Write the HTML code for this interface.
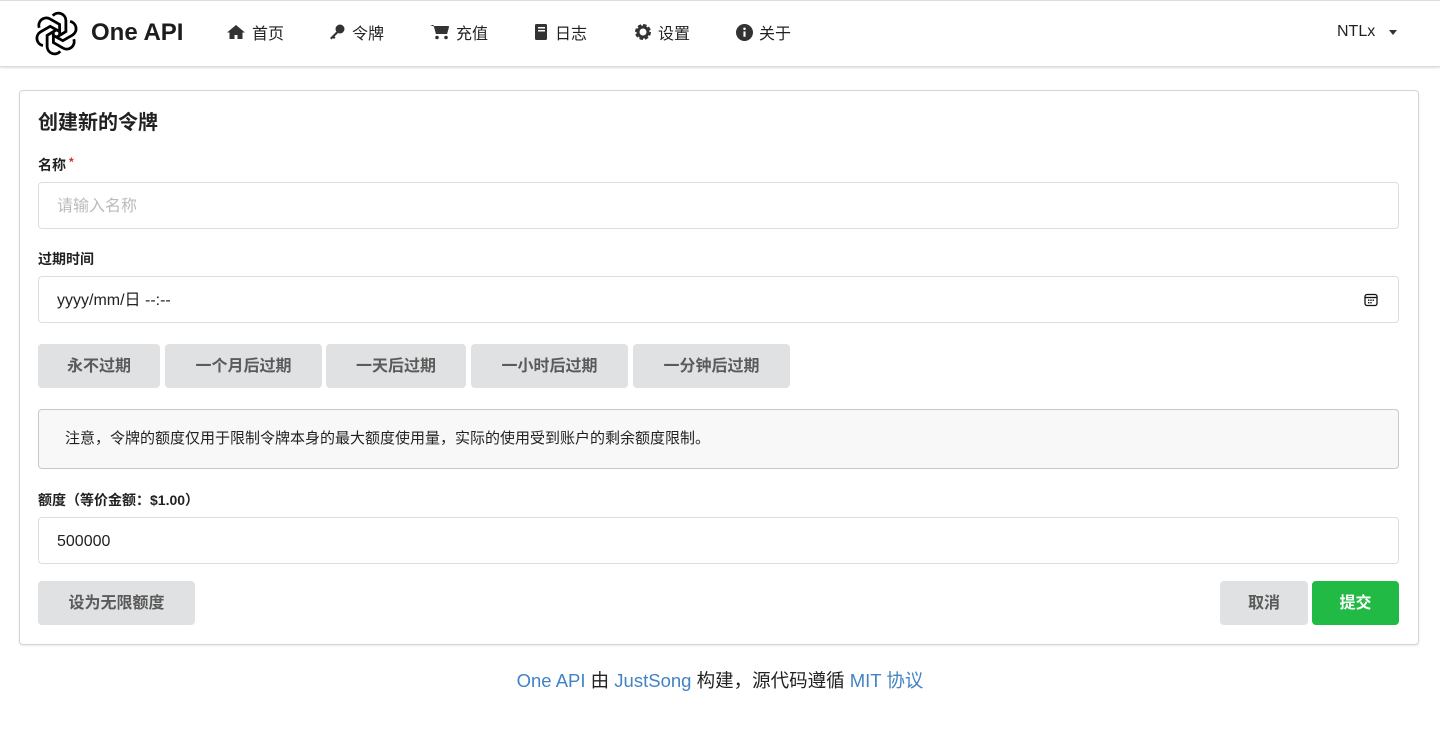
<!DOCTYPE html>
<html><head><meta charset="utf-8"><style>
*{box-sizing:border-box;margin:0;padding:0}
body{width:1440px;height:734px;background:#fff;font-family:"Liberation Sans","Noto Sans CJK SC",sans-serif;color:rgba(0,0,0,.87);font-size:14px;position:relative;overflow:hidden}
.nav{position:absolute;left:0;top:0;width:1440px;height:67px;border-top:1px solid #ddd;border-bottom:1px solid #ddd;box-shadow:0 1px 2px rgba(34,36,38,.15);background:#fff}
.nav .it{position:absolute;top:20px;height:22px;font-size:16px;display:flex;align-items:center;gap:6px;color:rgba(0,0,0,.87)}
.brand{position:absolute;left:91px;top:18px;font-size:24px;font-weight:bold;color:#1b1c1d}
.card{position:absolute;left:19px;top:90px;width:1400px;height:555px;border:1px solid #d4d4d5;border-radius:4px;box-shadow:0 1px 2px rgba(34,36,38,.1)}
.abs{position:absolute}
h1{position:absolute;left:38px;top:106px;font-size:20px;font-weight:bold}
.lb{position:absolute;left:38px;font-size:14px;font-weight:bold}
.in{position:absolute;left:38px;width:1361px;height:47px;border:1px solid rgba(34,36,38,.15);border-radius:4px;padding:0 18px;line-height:47px;font-size:16px}
.btn{position:absolute;height:44px;background:#e0e1e2;color:rgba(0,0,0,.6);font-weight:bold;font-size:16px;border-radius:4px;text-align:center;line-height:46px}
.msg{position:absolute;left:38px;top:409px;width:1361px;height:60px;background:#f8f8f9;border:1px solid rgba(34,36,38,.22);border-radius:4px;padding-left:26px;line-height:58px;font-size:15px}
.foot{position:absolute;left:0;width:1440px;top:667px;text-align:center;font-size:18.5px}
.foot a{color:#4183c4;text-decoration:none}
</style></head><body>
<div class="nav">
<svg class="abs" style="left:34px;top:10px" width="45" height="45" viewBox="0 0 24 24" fill="none" stroke="#000" stroke-width="1.5">
<g transform="translate(12 12)">
<path d="M-2 -9.5 a4 4 0 0 1 7 2.5 v6 l-5 3" transform="rotate(0)"/>
<path d="M-2 -9.5 a4 4 0 0 1 7 2.5 v6 l-5 3" transform="rotate(60)"/>
<path d="M-2 -9.5 a4 4 0 0 1 7 2.5 v6 l-5 3" transform="rotate(120)"/>
<path d="M-2 -9.5 a4 4 0 0 1 7 2.5 v6 l-5 3" transform="rotate(180)"/>
<path d="M-2 -9.5 a4 4 0 0 1 7 2.5 v6 l-5 3" transform="rotate(240)"/>
<path d="M-2 -9.5 a4 4 0 0 1 7 2.5 v6 l-5 3" transform="rotate(300)"/>
</g></svg>
<div class="brand">One API</div>
<div class="it" style="left:226px"><svg width="20" height="16" viewBox="0 0 20 16"><path d="M10 1L1 8.5h2.5V15h5v-4h3v4h5V8.5H19z" fill="#333"/></svg>首页</div>
<div class="it" style="left:328px"><svg width="18" height="16" viewBox="0 0 18 16"><circle cx="12" cy="5" r="4.5" fill="#333"/><path d="M9 7L2 14l1.5 1.5 1.5-1.5 1 1 1.5-1.5-1-1 3.5-3.5z" fill="#333"/></svg>令牌</div>
<div class="it" style="left:430px"><svg width="20" height="16" viewBox="0 0 20 16"><path d="M0 1h3.5l2.5 9h11l2-7H5" fill="#333"/><path d="M4 2h15l-2 8H6z" fill="#333"/><circle cx="7" cy="13.5" r="1.8" fill="#333"/><circle cx="16" cy="13.5" r="1.8" fill="#333"/></svg>充值</div>
<div class="it" style="left:533px"><svg width="16" height="16" viewBox="0 0 16 16"><rect x="2" y="0" width="12" height="16" rx="1.5" fill="#333"/><rect x="5" y="3" width="7" height="1.5" fill="#fff"/><rect x="5" y="6" width="7" height="1.5" fill="#fff"/></svg>日志</div>
<div class="it" style="left:634px"><svg width="18" height="18" viewBox="0 0 18 18"><circle cx="9" cy="9" r="6" fill="none" stroke="#333" stroke-width="4" stroke-dasharray="3 1.7"/><circle cx="9" cy="9" r="5" fill="none" stroke="#333" stroke-width="3"/></svg>设置</div>
<div class="it" style="left:736px"><svg width="17" height="17" viewBox="0 0 16 16"><circle cx="8" cy="8" r="8" fill="#333"/><rect x="7" y="7" width="2" height="5" fill="#fff"/><circle cx="8" cy="4.5" r="1.2" fill="#fff"/></svg>关于</div>
<div class="it" style="left:1337px">NTLx <span style="display:inline-block;margin-left:8px;border-left:4px solid transparent;border-right:4px solid transparent;border-top:5px solid #333"></span></div>
</div>
<div class="card"></div>
<h1>创建新的令牌</h1>
<div class="lb" style="top:155px">名称<span style="color:#db2828;font-size:12px;vertical-align:top;margin-left:3px">*</span></div>
<div class="in" style="top:182px;color:#bbb">请输入名称</div>
<div class="lb" style="top:249px">过期时间</div>
<div class="in" style="top:276px;color:#222">yyyy/mm/日 --:--
<svg class="abs" style="right:20px;top:16px" width="14" height="14" viewBox="0 0 14 14"><rect x="1" y="1.5" width="12" height="11" rx="2" fill="none" stroke="#111" stroke-width="1.3"/><line x1="1" y1="4.5" x2="13" y2="4.5" stroke="#111" stroke-width="1.3"/><g fill="#111"><rect x="4" y="6.5" width="1.4" height="1.4"/><rect x="6.3" y="6.5" width="1.4" height="1.4"/><rect x="8.6" y="6.5" width="1.4" height="1.4"/><rect x="4" y="9" width="1.4" height="1.4"/><rect x="6.3" y="9" width="1.4" height="1.4"/></g></svg></div>
<div class="btn" style="left:38px;top:344px;width:122px">永不过期</div>
<div class="btn" style="left:165px;top:344px;width:157px">一个月后过期</div>
<div class="btn" style="left:326px;top:344px;width:140px">一天后过期</div>
<div class="btn" style="left:471px;top:344px;width:157px">一小时后过期</div>
<div class="btn" style="left:633px;top:344px;width:157px">一分钟后过期</div>
<div class="msg">注意，令牌的额度仅用于限制令牌本身的最大额度使用量，实际的使用受到账户的剩余额度限制。</div>
<div class="lb" style="top:490px">额度（等价金额：$1.00）</div>
<div class="in" style="top:517px;color:#222">500000</div>
<div class="btn" style="left:38px;top:581px;width:157px">设为无限额度</div>
<div class="btn" style="left:1220px;top:581px;width:88px">取消</div>
<div class="btn" style="left:1312px;top:581px;width:87px;background:#21ba45;color:#fff">提交</div>
<div class="foot"><a>One API</a> 由 <a>JustSong</a> 构建，源代码遵循 <a>MIT 协议</a></div>
</body></html>
